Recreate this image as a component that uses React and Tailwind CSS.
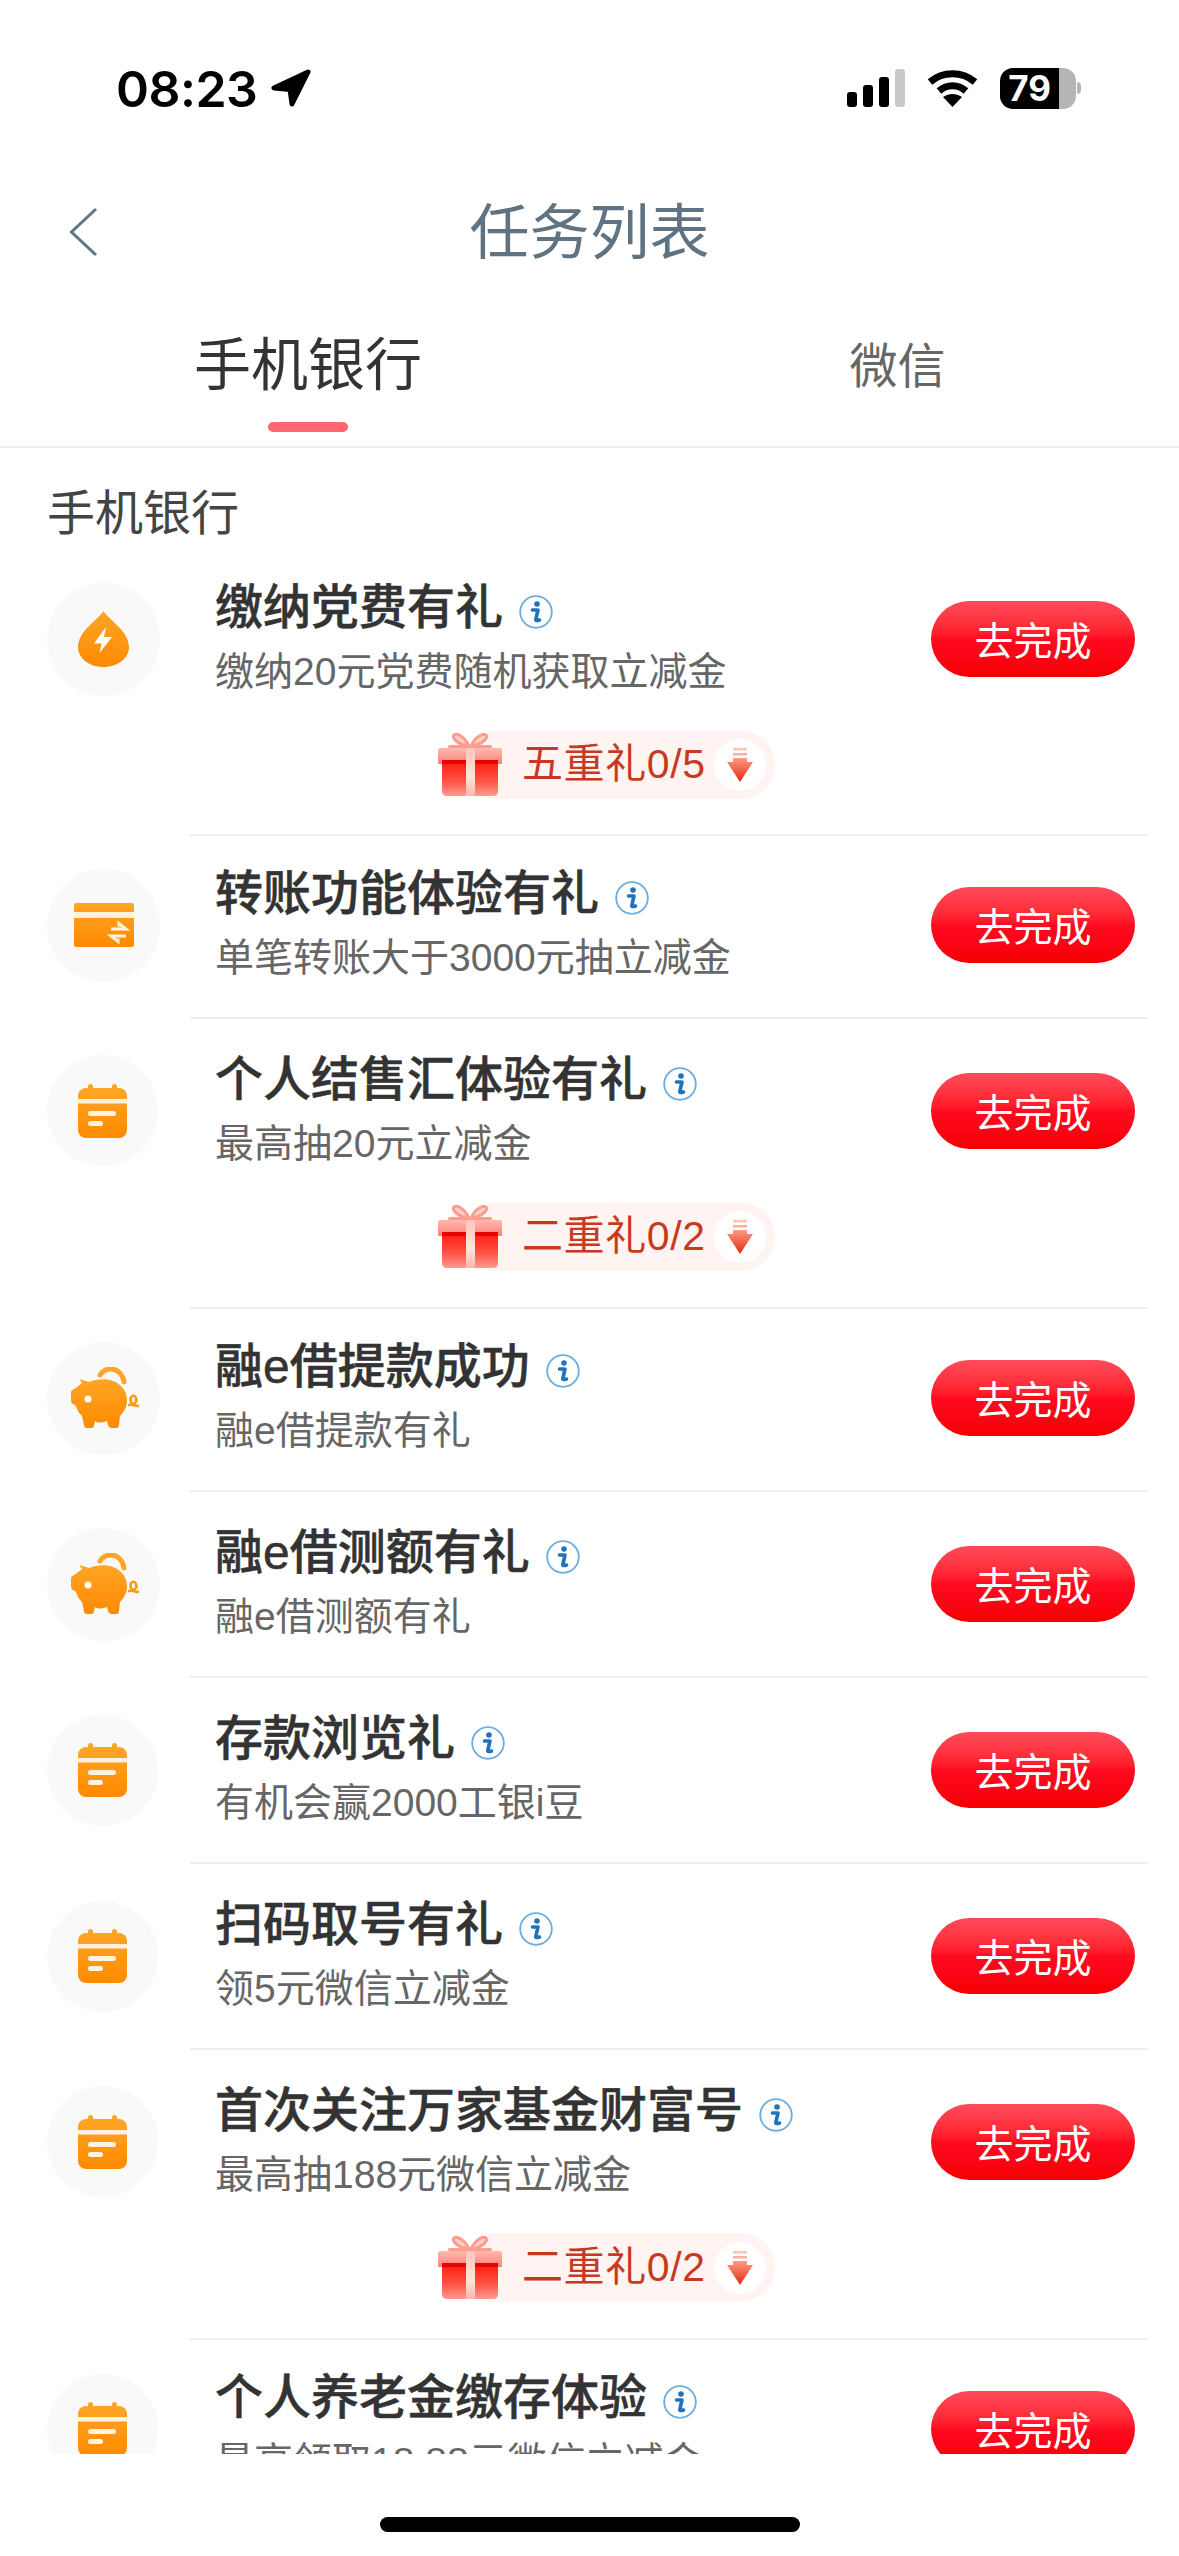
import React from "react";

const rows = [
  { icon: "drop", title: "缴纳党费有礼", sub: "缴纳20元党费随机获取立减金", badge: "五重礼0/5", head: "h-[178px]", pad: "pb-[35px]", badgeTop: "pt-[2px]" },
  { icon: "card", title: "转账功能体验有礼", sub: "单笔转账大于3000元抽立减金", head: "h-[178px]", pad: "pb-[3px]" },
  { icon: "cal", title: "个人结售汇体验有礼", sub: "最高抽20元立减金", badge: "二重礼0/2", head: "h-[183px]", pad: "pb-[36px]" },
  { icon: "pig", title: "融e借提款成功", sub: "融e借提款有礼", head: "h-[178px]", pad: "pb-[3px]" },
  { icon: "pig", title: "融e借测额有礼", sub: "融e借测额有礼", head: "h-[184px]", pad: "" },
  { icon: "cal", title: "存款浏览礼", sub: "有机会赢2000工银i豆", head: "h-[184px]", pad: "" },
  { icon: "cal", title: "扫码取号有礼", sub: "领5元微信立减金", head: "h-[184px]", pad: "" },
  { icon: "cal", title: "首次关注万家基金财富号", sub: "最高抽188元微信立减金", badge: "二重礼0/2", head: "h-[183px]", pad: "pb-[36px]" },
  { icon: "cal", title: "个人养老金缴存体验", sub: "最高领取18.88元微信立减金", head: "h-[178px]", pad: "pb-[3px]" },
];

function Orange() {
  return (
    <defs>
      <linearGradient id="orange" x1="0" y1="0" x2="0" y2="1">
        <stop offset="0" stopColor="#ffa526" />
        <stop offset="1" stopColor="#ff8a00" />
      </linearGradient>
    </defs>
  );
}

function DropIcon() {
  return (
    <svg width="51" height="56" viewBox="0 0 51 56">
      <Orange />
      <path d="M25.5 0C31 9 51 20 51 36C51 47 40 56 25.5 56C11 56 0 47 0 36C0 20 20 9 25.5 0Z" fill="url(#orange)" />
      <path d="M28 16L16 32.5H23.5L21.5 42L34 26H26Z" fill="#fff" />
    </svg>
  );
}

function CardIcon() {
  return (
    <svg width="60" height="44" viewBox="0 0 60 44">
      <Orange />
      <rect width="60" height="44" rx="2.5" fill="url(#orange)" />
      <rect y="9" width="60" height="6" fill="#fff3e0" />
      <path d="M37 26H52L45 20.5V23.5M52 33H37L44 38.5V35.5" fill="none" stroke="#fff3e0" strokeWidth="3" />
    </svg>
  );
}

function CalIcon() {
  return (
    <svg width="49" height="54" viewBox="0 0 49 54">
      <Orange />
      <rect x="10" width="5" height="10" rx="2.5" fill="#ffa526" />
      <rect x="34" width="5" height="10" rx="2.5" fill="#ffa526" />
      <rect y="4" width="49" height="50" rx="8" fill="url(#orange)" />
      <rect y="15" width="49" height="4.5" fill="#fff3e0" />
      <rect x="10" y="27" width="28" height="5" rx="2.5" fill="#fff3e0" />
      <rect x="10" y="37" width="15" height="5" rx="2.5" fill="#fff3e0" />
    </svg>
  );
}

function PigIcon() {
  return (
    <svg width="69" height="62" viewBox="0 0 69 62" className="ml-[4px]">
      <Orange />
      <path d="M29 8C32 3 36 2 40 2C47 2 52 8 53 15" fill="none" stroke="#ffa526" strokeWidth="5" strokeLinecap="round" />
      <path d="M8 12L18 15C24 12 36 11 42 14C50 17 56 24 56 33C56 40 53 45 49 49L48 58Q48 61 45 61L41 61Q38 61 37 58L36 54C30 56 27 56 24 54L23 58Q23 61 20 61L16 61Q13 61 13 58L11 49C8 46 6 43 5 39L2 37Q0 36 0 33L0 25Q0 23 3 22L6 20C8 18 10 17 11 16Z" fill="url(#orange)" />
      <circle cx="17" cy="32" r="3.5" fill="#fff" />
      <path d="M57 38C62 38 67 36 65 31C63 26 58 30 60 35C61 38 64 39 68 39" fill="none" stroke="#ff9a14" strokeWidth="2.5" />
    </svg>
  );
}

const icons = {
  drop: { Icon: DropIcon, circle: "h-[113px] w-[113px]" },
  card: { Icon: CardIcon, circle: "h-[113px] w-[113px]" },
  cal: { Icon: CalIcon, circle: "h-[111px] w-[111px]" },
  pig: { Icon: PigIcon, circle: "h-[113px] w-[113px]" },
};

function InfoIcon() {
  return (
    <svg width="34" height="34" viewBox="0 0 34 34" className="mt-[8px] shrink-0">
      <circle cx="17" cy="17" r="15.8" fill="#fff" stroke="#6badde" strokeWidth="1.8" />
      <circle cx="18" cy="9" r="2.8" fill="#1f74bd" />
      <path d="M13.5 15H19L16.8 24.5Q16.6 26.3 20.5 25" fill="none" stroke="#1f74bd" strokeWidth="3.6" strokeLinecap="round" strokeLinejoin="round" />
    </svg>
  );
}

function GiftIcon() {
  return (
    <svg width="64" height="64" viewBox="0 0 64 64" className="relative z-10 shrink-0 -mr-[14px]">
      <defs>
        <linearGradient id="lid" x1="0" y1="0" x2="0" y2="1">
          <stop offset="0" stopColor="#ffb9b0" />
          <stop offset="1" stopColor="#ff8278" />
        </linearGradient>
        <linearGradient id="body" x1="0" y1="0" x2="0" y2="1">
          <stop offset="0" stopColor="#ff1f10" />
          <stop offset="0.55" stopColor="#ff5144" />
          <stop offset="1" stopColor="#ff9a90" />
        </linearGradient>
        <linearGradient id="stripe" x1="0" y1="0" x2="0" y2="1">
          <stop offset="0" stopColor="#ffc4bc" />
          <stop offset="0.6" stopColor="#ffe4df" />
          <stop offset="1" stopColor="#ffb5ac" />
        </linearGradient>
      </defs>
      <path d="M31 13C27 4 19 -0.5 16 2C13 5 21 12 31 13Z" fill="#ffd2cb" stroke="#ff9c90" strokeWidth="3" />
      <path d="M33 13C37 4 45 -0.5 48 2C51 5 43 12 33 13Z" fill="#ffd2cb" stroke="#ff9c90" strokeWidth="3" />
      <rect x="10" y="12" width="44" height="3" rx="1.5" fill="#ff9c90" />
      <path d="M4 29H60V58Q60 63 55 63H9Q4 63 4 58Z" fill="url(#body)" />
      <path d="M0 17Q0 15 2 15H62Q64 15 64 17V31H0Z" fill="url(#lid)" />
      <rect x="4" y="27" width="56" height="4" fill="#e60400" />
      <rect x="28" y="15" width="9" height="48" fill="url(#stripe)" />
    </svg>
  );
}

function Badge({ text }) {
  return (
    <div className="flex items-center pl-[248px]">
      <GiftIcon />
      <div className="flex h-[69px] items-center rounded-r-full bg-[#fff4f2] pl-[34px] pr-[9px]">
        <span className="w-[192px] whitespace-nowrap text-[41px] leading-none tracking-[0.6px] text-[#c63a1f]">{text}</span>
        <span className="flex h-[52px] w-[52px] items-center justify-center rounded-full bg-white">
          <svg width="26" height="34" viewBox="0 0 26 34">
            <defs>
              <linearGradient id="arrow" x1="0" y1="0" x2="0" y2="1">
                <stop offset="0" stopColor="#ff9c84" />
                <stop offset="1" stopColor="#e02a0c" />
              </linearGradient>
            </defs>
            <rect x="6" y="0" width="14" height="2.5" fill="#ffc4b4" />
            <rect x="6" y="5" width="14" height="2.5" fill="#ffb09c" />
            <path d="M6 10H20V14H26L13 34L0 14H6Z" fill="url(#arrow)" />
          </svg>
        </span>
      </div>
    </div>
  );
}

function TaskRow({ row }) {
  const { Icon, circle } = icons[row.icon];
  return (
    <div className="flex pr-[31px]">
      <div className={`flex w-[190px] shrink-0 items-center pl-[47px] ${row.head}`}>
        <div className={`flex items-center justify-center rounded-full bg-[#f9f9f9] ${circle}`}>
          <Icon />
        </div>
      </div>
      <div className={`flex-1 border-b-2 border-[#eeeeee] ${row.pad}`}>
        <div className={`flex items-center justify-between pl-[25px] pr-[13px] ${row.head}`}>
          <div className="pt-[2px]">
            <div className="flex items-center gap-[16px]">
              <span className="whitespace-nowrap text-[48px] font-medium leading-[48px] text-[#333333] [-webkit-text-stroke:0.5px_#333333]">{row.title}</span>
              <InfoIcon />
            </div>
            <p className="mt-[16px] whitespace-nowrap text-[39px] leading-[48px] text-[#666666]">{row.sub}</p>
          </div>
          <button className="h-[76px] w-[204px] rounded-full bg-gradient-to-b from-[#ff4a5a] via-[#ff0a20] to-[#f50000] pt-[5px] text-[39px] leading-none text-white">
            去完成
          </button>
        </div>
        {row.badge && (
          <div className={row.badgeTop}>
            <Badge text={row.badge} />
          </div>
        )}
      </div>
    </div>
  );
}

export default function App() {
  return (
    <div
      className="flex h-[2556px] w-[1179px] flex-col overflow-hidden bg-white"
      style={{ fontFamily: '"Liberation Sans", "Noto Sans CJK SC", sans-serif' }}
    >
      {/* status bar */}
      <div className="flex h-[168px] shrink-0 items-start justify-between pl-[116px] pr-[98px] pt-[67px]">
        <div className="flex h-[42px] items-center gap-[14px]">
          <span className="pt-[2px] font-['Inter'] text-[50px] font-semibold leading-none tracking-[-0.5px] text-black">08:23</span>
          <svg width="40" height="38" viewBox="0 0 40 38">
            <path d="M37 3L3 19L19 20.5L21 35Z" fill="#000" stroke="#000" strokeWidth="5" strokeLinejoin="round" />
          </svg>
        </div>
        <div className="flex h-[42px] items-center">
          <svg width="58" height="38" viewBox="0 0 58 38" className="mr-[22px]">
            <rect x="0" y="23" width="10" height="15" rx="3" fill="#000" />
            <rect x="16" y="16" width="10" height="22" rx="3" fill="#000" />
            <rect x="32" y="8" width="10" height="30" rx="3" fill="#000" />
            <rect x="48" y="0" width="10" height="38" rx="3" fill="#c9c9c9" />
          </svg>
          <svg width="51" height="38" viewBox="0 0 51 38" className="mr-[22px]">
            <path d="M3 13C16 2 35 2 48 13" fill="none" stroke="#000" strokeWidth="7" />
            <path d="M12 22C20 15 31 15 39 22" fill="none" stroke="#000" strokeWidth="7" />
            <path d="M25.5 38L16 28C22 24 29 24 35 28Z" fill="#000" />
          </svg>
          <div className="flex h-[41px] items-center">
            <div className="flex h-[41px] w-[59px] items-center justify-center rounded-l-[13px] bg-black font-['Inter'] text-[35px] font-bold leading-none text-white">
              79
            </div>
            <div className="h-[41px] w-[17px] rounded-r-[13px] bg-[#b5b5b5]" />
            <div className="ml-[1px] h-[12px] w-[4px] rounded-r-full bg-[#b5b5b5]" />
          </div>
        </div>
      </div>

      {/* nav */}
      <div className="relative flex h-[128px] shrink-0 items-center justify-center pt-[3px]">
        <svg width="29" height="50" viewBox="0 0 29 50" className="absolute left-[69px] top-[39px]">
          <path d="M27 2L2.5 25L27 48" fill="none" stroke="#5f7689" strokeWidth="3" />
        </svg>
        <h1 className="text-[60px] font-normal leading-none text-[#5f7383]">任务列表</h1>
      </div>

      {/* tabs */}
      <div className="flex h-[152px] shrink-0 border-b-2 border-[#eeeeee]">
        <div className="flex w-[616px] flex-col items-center">
          <span className="mt-[39px] text-[57px] leading-[60px] text-[#333333]">手机银行</span>
          <span className="mt-[27px] h-[10px] w-[80px] rounded-full bg-[#ff6670]" />
        </div>
        <div className="flex-1 text-center">
          <span className="mt-[45px] block text-[48px] leading-[52px] text-[#666666]">微信</span>
        </div>
      </div>

      {/* list */}
      <div className="flex-1 overflow-hidden">
        <p className="pb-[12px] pl-[47px] pt-[42px] text-[48px] leading-[48px] text-[#444444]">手机银行</p>
        {rows.map((row, i) => (
          <TaskRow key={i} row={row} />
        ))}
      </div>

      {/* home indicator */}
      <div className="flex h-[102px] shrink-0 justify-center pt-[63px]">
        <div className="h-[15px] w-[420px] rounded-full bg-black" />
      </div>
    </div>
  );
}
